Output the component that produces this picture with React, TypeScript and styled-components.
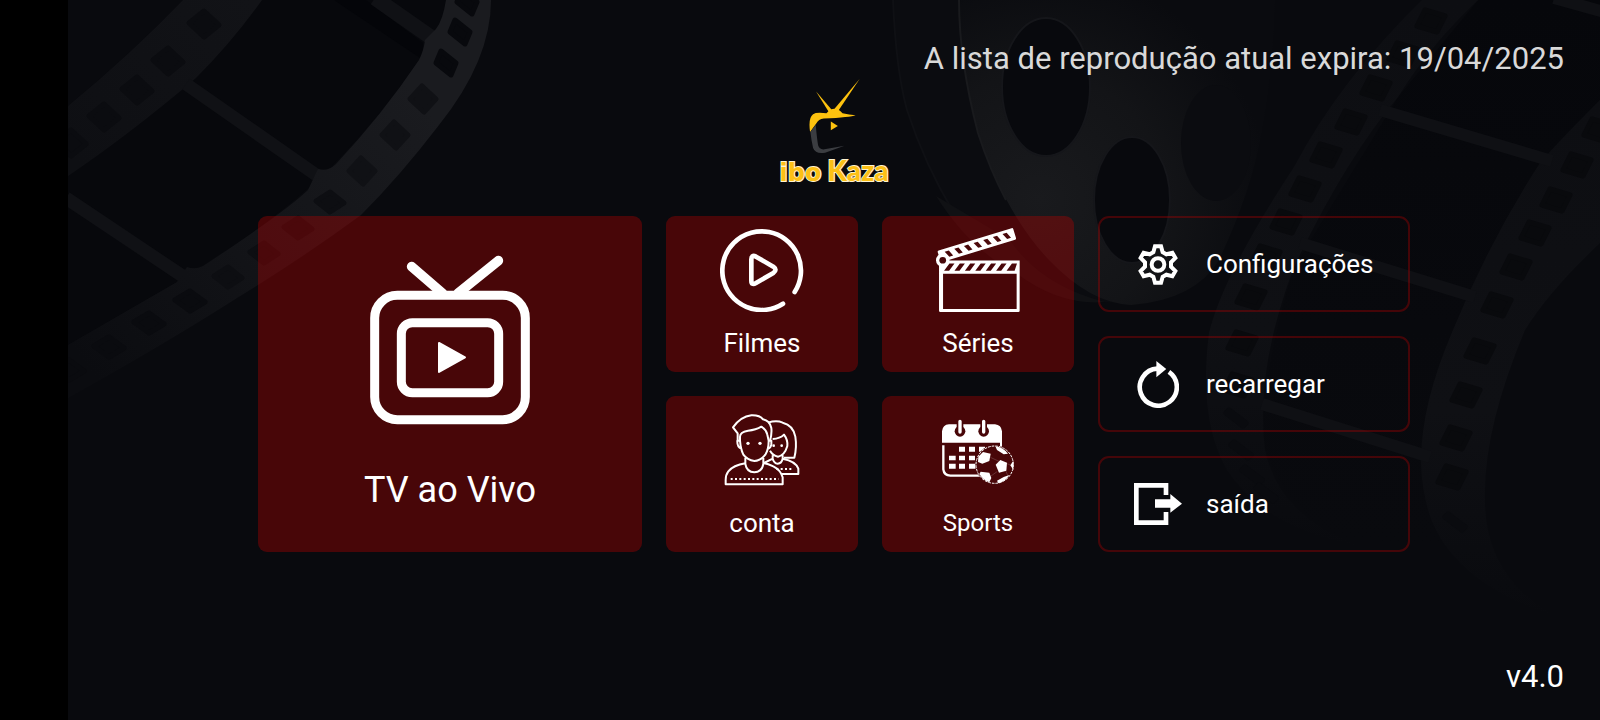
import React from "react";
import styled, { createGlobalStyle } from "styled-components";

const GlobalStyle = createGlobalStyle`
  *, *::before, *::after { box-sizing: border-box; }
  body {
    margin: 0;
    background: #000;
    color: #fff;
    font-family: Roboto, "Noto Sans", sans-serif;
  }
`;

const Page = styled.div`
  min-height: 100vh;
  padding-left: 68px;
  display: flex;
`;

const Stage = styled.main`
  position: relative;
  isolation: isolate;
  flex: 1;
  min-width: 0;
  display: flex;
  flex-direction: column;
  overflow: hidden;
  background: #090a0e;
`;

const Backdrop = styled.svg`
  position: absolute;
  inset: 0;
  width: 100%;
  height: 100%;
  z-index: -1;
`;

const Expiry = styled.p`
  margin: 0;
  padding: 41px 36px 0;
  text-align: right;
  font-size: 31px;
  line-height: 36px;
  color: #d9d9d9;
`;

const Brand = styled.h1`
  margin: 2px 0 0;
  display: flex;
  flex-direction: column;
  align-items: center;
  font-weight: 900;
  color: #fcc015;
`;

const Wordmark = styled.span`
  display: flex;
  align-items: baseline;
  gap: 6px;
  height: 32px;
  line-height: 32px;
`;

const Word = styled.span<{ $size: number; $family: string }>`
  font-family: ${({ $family }) => $family}, sans-serif;
  font-size: ${({ $size }) => $size}px;
  -webkit-text-stroke: 2px #fff3cf;
  paint-order: stroke fill;
`;

const Menu = styled.nav`
  width: 100%;
  max-width: 1152px;
  margin: 30px auto 0;
  display: grid;
  grid-template-columns: 384fr 408fr 312fr;
  gap: 24px;
`;

const TileGrid = styled.div`
  display: grid;
  grid-template-columns: 1fr 1fr;
  gap: 24px;
`;

const SideList = styled.div`
  display: grid;
  gap: 24px;
`;

const Tile = styled.button<{ $large?: boolean; $low?: boolean }>`
  display: flex;
  flex-direction: column;
  align-items: center;
  justify-content: space-between;
  min-height: 156px;
  padding: ${({ $large, $low }) =>
    $large ? "39px 12px 40px" : $low ? "18px 12px 13px" : "12px 12px 13px"};
  border: 0;
  border-radius: 9px;
  background: rgba(186, 0, 0, 0.36);
  color: inherit;
  font-family: inherit;
  font-size: ${({ $large }) => ($large ? 36 : 26)}px;
  line-height: ${({ $large }) => ($large ? 44 : 32)}px;
  cursor: pointer;
`;

const SmallLabel = styled.span`
  font-size: 24px;
`;

const SideButton = styled.button`
  display: flex;
  align-items: center;
  gap: 24px;
  height: 96px;
  padding: 0 34px;
  border: 2px solid rgba(184, 0, 0, 0.35);
  border-radius: 11px;
  background: transparent;
  color: inherit;
  font-family: inherit;
  font-size: 26px;
  line-height: 32px;
  cursor: pointer;
`;

const IconSlot = styled.span`
  flex: none;
  width: 48px;
  display: flex;
  justify-content: center;
`;

const Version = styled.footer`
  margin-top: auto;
  padding: 24px 36px 25px;
  text-align: right;
  font-size: 31px;
  line-height: 36px;
`;

type Point = [number, number];

/* Perforations: diamonds given by half axes; tilt shifts the side corners, lean the top and bottom ones */
const Holes = ({ at, rx, ry, tilt, lean, fill }: { at: Point[]; rx: number; ry: number; tilt: number; lean: number; fill: string }) => (
  <g fill={fill} stroke={fill} strokeWidth="5" strokeLinejoin="round">
    {at.map(([x, y]) => (
      <path key={`${x}-${y}`} d={`M${x - rx} ${y + tilt}L${x - lean} ${y - ry}L${x + rx} ${y - tilt}L${x + lean} ${y + ry}Z`} />
    ))}
  </g>
);

const SquareHoles = ({ at }: { at: Point[] }) => (
  <g fill="#090a0d" stroke="#090a0d" strokeWidth="5" strokeLinejoin="round">
    {at.map(([x, y]) => (
      <path key={`${x}-${y}`} d={`M${x - 6} ${y - 11}L${x + 14} ${y - 5}L${x + 6} ${y + 11}L${x - 14} ${y + 5}Z`} />
    ))}
  </g>
);

const BackdropArt = () => (
  <Backdrop viewBox="68 0 1532 720" preserveAspectRatio="xMidYMid slice" aria-hidden="true">
    <defs>
      <linearGradient id="stripFade" gradientUnits="userSpaceOnUse" x1="420" y1="100" x2="90" y2="370">
        <stop offset="0" stopColor="#1a1b1f" />
        <stop offset="0.5" stopColor="#131418" />
        <stop offset="1" stopColor="#0b0c10" />
      </linearGradient>
      <linearGradient id="stripTop" gradientUnits="userSpaceOnUse" x1="250" y1="0" x2="68" y2="150">
        <stop offset="0" stopColor="#121317" />
        <stop offset="1" stopColor="#0e0f13" />
      </linearGradient>
      <radialGradient id="plate" gradientUnits="userSpaceOnUse" cx="1040" cy="200" r="230">
        <stop offset="0" stopColor="#191a1d" />
        <stop offset="0.55" stopColor="#131417" />
        <stop offset="1" stopColor="#0a0b0f" />
      </radialGradient>
      <linearGradient id="farStrip" x1="0" y1="0" x2="0" y2="1">
        <stop offset="0" stopColor="#0d0e12" />
        <stop offset="0.6" stopColor="#0f1014" />
        <stop offset="1" stopColor="#090a0e" />
      </linearGradient>
      <linearGradient id="farFrames" x1="0" y1="0" x2="0" y2="1">
        <stop offset="0" stopColor="#06070b" />
        <stop offset="0.6" stopColor="#08090d" />
        <stop offset="1" stopColor="#090a0e" />
      </linearGradient>
    </defs>

    <path d="M183 0H446Q440 32 419 60Q382 115 331 167Q285 212 203 267L68 345V106Q130 55 183 0Z" fill="#07080c" />
    <path d="M334 0H366L423 43V60Z" fill="#040509" />
    <path d="M183 0Q130 55 68 106V176Q130 134 196 78Q232 42 262 0Z" fill="url(#stripTop)" />
    <g stroke="#101115" strokeWidth="13" fill="none">
      <path d="M186 84L322 179M66 198L190 281" />
      <path d="M375 -2L432 38" strokeWidth="15" />
    </g>
    <path
      d="M446 0Q443 20 436 29Q431 34 425 40Q424 50 419 60Q382 115 336 164Q328 172 318 169L308 190Q285 212 203 266Q195 270 187 267L177 282L68 345V398Q165 344 237 298Q304 257 361 215Q400 176 439 125Q491 60 491 0Z"
      fill="url(#stripFade)"
    />
    <Holes fill="#0b0c10" rx={15} ry={13} tilt={-1} lean={0} at={[[204, 24], [168, 61], [137, 90], [104, 117], [71, 143]]} />
    <Holes fill="#08090d" rx={10} ry={12} tilt={0} lean={5} at={[[467, 2], [460, 32], [446, 63]]} />
    <Holes
      fill="#101115"
      rx={13}
      ry={13}
      tilt={0}
      lean={1}
      at={[[423, 99], [395, 135], [362, 171]]}
    />
    <Holes fill="#0d0e12" rx={14} ry={10} tilt={-1} lean={0} at={[[330, 202], [298, 228], [264, 253], [228, 277]]} />
    <Holes fill="#0a0b0f" rx={15} ry={10} tilt={-1} lean={0} at={[[190, 301], [149, 323], [109, 347], [69, 370]]} />

    <path d="M893 0Q896 70 907 110Q925 165 954 213Q985 255 1016 273Q1045 295 1072 300L1130 304L960 0Z" fill="#0b0c10" />
    <path d="M893 0Q896 70 907 110Q925 165 954 213" fill="none" stroke="#0f1014" strokeWidth="2" />
    <path d="M936 196L1010 240Q1040 285 1105 302Q1060 306 1016 273Q970 250 936 196Z" fill="#101114" />
    <path
      d="M959 0Q959 60 978 133Q1006 215 1049 260Q1090 303 1131 305Q1195 300 1219 260Q1252 190 1262 130Q1273 70 1275 0Z"
      fill="url(#plate)"
    />
    <path d="M959 0Q959 60 978 133Q990 170 1006 200" fill="none" stroke="#191a1d" strokeWidth="2" />
    <g fill="#08090d" stroke="#15161a" strokeWidth="2">
      <ellipse cx="1046" cy="87" rx="44" ry="69" />
      <ellipse cx="1132" cy="200" rx="38" ry="63" />
    </g>
    <ellipse cx="1216" cy="143" rx="35" ry="58" fill="#0b0c10" />

    <path d="M1478 0L1398 97L1294 267Q1262 370 1263 440Q1280 510 1347 540L1440 543Q1410 460 1453 330Q1490 240 1540 163L1600 100V0Z" fill="url(#farFrames)" />
    <path
      d="M1422 0Q1340 80 1294 167Q1223 275 1209 333Q1198 420 1227 470Q1265 530 1367 548Q1280 520 1265 450Q1255 370 1294 267Q1345 160 1398 97Q1430 45 1478 0Z"
      fill="url(#farStrip)"
    />
    <path
      d="M1600 100Q1555 145 1540 163Q1490 240 1453 330Q1410 430 1425 497Q1440 580 1560 618Q1485 580 1485 500Q1483 430 1525 330Q1550 290 1600 243Z"
      fill="url(#farStrip)"
    />
    <path d="M1380 110L1552 161M1300 243L1475 297M1262 404L1430 457M1554 -2L1604 12" stroke="#0f1014" strokeWidth="12" fill="none" />
    <SquareHoles
      at={[[1431, 21], [1403, 54], [1376, 88], [1351, 122], [1326, 155], [1305, 189], [1286, 222], [1266, 257], [1251, 297], [1242, 343], [1238, 385]]}
    />
    <SquareHoles
      at={[[1598, 130], [1577, 165], [1556, 200], [1535, 233], [1516, 267], [1497, 305], [1480, 351], [1466, 395], [1456, 438], [1452, 477]]}
    />
    <Holes fill="#0a0b0f" rx={10} ry={8} tilt={-5} lean={7} at={[[1236, 418], [1241, 450], [1252, 475], [1266, 493], [1455, 522]]} />
  </Backdrop>
);

const LogoMark = () => (
  <svg width="51" height="75" viewBox="146 26 152 224" aria-hidden="true">
    <g fill="#fdc20f">
      <path d="M167 63L215 119L206 126Z" />
      <path d="M297 26L234 120L222 115Z" />
      <path d="M198 128Q222 102 246 128Q266 132 285 134Q270 140 190 144Q174 146 168 158L149 184Q143 142 158 131Q164 127 178 127Z" />
      <path d="M211 153V179L232 166Z" />
    </g>
    <path d="M150 184L166 163Q169 200 173 224Q177 238 192 236L252 225L194 246Q166 252 158 232Q153 210 150 184Z" fill="#3b3d41" />
  </svg>
);

const TvIcon = () => (
  <svg width="160" height="170" viewBox="90 45 480 510" fill="none" stroke="#fff" strokeWidth="27" aria-hidden="true">
    <rect x="104" y="166" width="452" height="373" rx="68" />
    <rect x="184" y="248" width="292" height="210" rx="33" />
    <path d="M215 80L308 160M475 62L354 160" strokeWidth="29" strokeLinecap="round" />
    <path d="M297 309V396L375 352Z" fill="#fff" strokeWidth="6" strokeLinejoin="round" />
  </svg>
);

const MovieIcon = () => (
  <svg width="84" height="84" viewBox="180 54 250 252" fill="none" stroke="#fff" strokeWidth="14" strokeLinecap="round" strokeLinejoin="round" aria-hidden="true">
    <path d="M403 246A118 118 0 1 0 368 281" />
    <path d="M273 148Q273 133 287 140L339 170Q352 179 339 189L287 219Q273 227 273 212Z" />
  </svg>
);

const steps = [0, 1, 2, 3, 4, 5, 6];

const ClapperIcon = () => (
  <svg width="84" height="84" viewBox="183 53 250 250" fill="#fff" aria-hidden="true">
    <path
      fillRule="evenodd"
      d={
        "M192 154Q192 150 210 150H432V299Q432 303 428 303H196Q192 303 192 299ZM204 189V294H423V189Z" +
        steps.map((i) => `M${207 + i * 31} 180L${223 + i * 31} 159H${i === 6 ? 424 : 238 + i * 31}L${i === 6 ? 417 : 222 + i * 31} 180Z`).join("")
      }
    />
    <path
      fillRule="evenodd"
      transform="translate(187 121) rotate(-17)"
      d={"M4 0H231Q235 0 235 4V32Q235 36 231 36H4Q0 36 0 32V4Q0 0 4 0Z" + steps.map((i) => `M${20 + i * 30} 9H${33 + i * 30}L${41 + i * 30} 27H${29 + i * 30}Z`).join("")}
    />
    <circle cx="203" cy="149" r="20" />
    <circle cx="203" cy="149" r="10" fill="#470709" />
  </svg>
);

const PeopleIcon = () => (
  <svg width="76" height="72" viewBox="192 72 228 216" fill="none" stroke="#fff" strokeWidth="6" strokeLinejoin="round" aria-hidden="true">
    <path d="M233 150V130L219 112Q242 80 274 76Q299 75 309 88Q329 92 334 114Q336 132 330 152" />
    <path d="M240 152V140Q240 126 264 122Q288 120 304 110Q320 120 322 134L326 152Q326 178 316 194Q302 212 283 213Q262 210 250 194Q242 178 240 152H232Q231 172 244 176M326 152H334V164Q332 174 324 176" />
    <path d="M256 204V222Q260 246 283 247Q306 246 310 222V204" />
    <path d="M256 220Q220 226 205 244Q197 254 197 270V283H368V262Q362 240 340 229Q325 221 310 219" />
    <path d="M324 98Q350 90 368 98Q400 106 406 140Q411 172 403 203H372" />
    <path d="M338 147Q360 146 372 134Q384 150 382 168Q374 196 354 200Q338 196 330 182M338 196V206Q342 220 353 221Q365 220 368 206V196M368 206Q408 214 415 236V252H366M338 206L312 219" />
    <g fill="#fff" stroke="none">
      <circle cx="264" cy="160" r="5" />
      <circle cx="300" cy="160" r="5" />
      <circle cx="341" cy="167" r="4" />
      <circle cx="365" cy="167" r="4" />
    </g>
    <path d="M212 267H356M349 237H394" strokeDasharray="6 7" />
  </svg>
);

const SportsIcon = () => (
  <svg width="74" height="72" viewBox="198 70 222 216" fill="#fff" aria-hidden="true">
    <mask id="ringGap">
      <rect x="190" y="80" width="240" height="210" fill="#fff" />
      <path d="M255 100V122M326 100V122" stroke="#000" strokeWidth="20" />
      <circle cx="255" cy="122" r="16" fill="#000" />
      <circle cx="326" cy="122" r="16" fill="#000" />
      <circle cx="359" cy="222" r="58" fill="#000" />
    </mask>
    <g mask="url(#ringGap)">
      <path d="M201 156V122Q203 102 222 101H360Q379 103 381 122V175H375V156Z" />
      <path d="M205 164V236Q207 254 226 255H320" fill="none" stroke="#fff" strokeWidth="7" />
      <path d="M252 168h18v15h-18zM282 168h18v15h-18zM312 168h18v15h-18zM222 195h20v14h-20zM252 195h18v14h-18zM282 195h18v14h-18zM222 219h20v15h-20zM252 219h18v15h-18zM282 219h20v15h-20z" />
    </g>
    <path d="M255 92V124M326 92V124" stroke="#fff" strokeWidth="10" strokeLinecap="round" />
    <circle cx="359" cy="222" r="56" fill="none" stroke="#fff" strokeWidth="3" strokeDasharray="8 3" />
    <path d="M362 222L376 208L396 216L394 240L372 246Z" />
    <path d="M310 198L324 184L347 189L343 211L322 219L309 214Z" />
    <path d="M317 243L343 246L349 262L343 275Q324 268 313 250Z" />
    <path d="M361 167Q384 170 399 189L386 191L366 178Z" />
    <path d="M415 210V238L406 224Z" />
    <path d="M366 270L386 259L403 253Q392 272 370 278Z" />
    <path d="M346 200L372 212M392 240L398 254M366 243L348 256M396 219L408 224" fill="none" stroke="#fff" strokeWidth="1" opacity="0.5" />
  </svg>
);

const gearTooth: Point[] = [[-14, -37], [-9, -55], [9, -55], [14, -37]];
const gearPoints = steps
  .slice(0, 6)
  .flatMap((k) => {
    const a = (k * Math.PI) / 3;
    return gearTooth.map(([x, y]) => `${(x * Math.cos(a) - y * Math.sin(a)).toFixed(1)},${(x * Math.sin(a) + y * Math.cos(a)).toFixed(1)}`);
  })
  .join(" ");

const GearIcon = () => (
  <svg width="40" height="41" viewBox="-60 -61 120 122" fill="none" stroke="#fff" strokeWidth="12" aria-hidden="true">
    <polygon points={gearPoints} />
    <circle r="19" />
  </svg>
);

const ReloadIcon = () => (
  <svg width="42" height="47" viewBox="141 467 126 142" aria-hidden="true">
    <path d="M237 500A56 56 0 1 1 202 490" fill="none" stroke="#fff" strokeWidth="14" />
    <path d="M199 467V516L229 491Z" fill="#fff" />
  </svg>
);

const ExitIcon = () => (
  <svg width="48" height="42" viewBox="132 834 144 126" aria-hidden="true">
    <path d="M228 870V841H139V953H228V921" fill="none" stroke="#fff" strokeWidth="14" />
    <path d="M195 883H241V867L276 896L241 923V908H195Z" fill="#fff" />
  </svg>
);

export default function App() {
  return (
    <>
      <GlobalStyle />
      <Page>
        <Stage>
          <BackdropArt />
          <Expiry>A lista de reprodução atual expira: 19/04/2025</Expiry>
          <Brand>
            <LogoMark />
            <Wordmark>
              <Word $size={24} $family='"DejaVu Sans"'>ibo</Word>
              <Word $size={28} $family="Lato">Kaza</Word>
            </Wordmark>
          </Brand>
          <Menu>
            <Tile $large type="button">
              <TvIcon />
              TV ao Vivo
            </Tile>
            <TileGrid>
              <Tile type="button">
                <MovieIcon />
                Filmes
              </Tile>
              <Tile type="button">
                <ClapperIcon />
                Séries
              </Tile>
              <Tile $low type="button">
                <PeopleIcon />
                conta
              </Tile>
              <Tile $low type="button">
                <SportsIcon />
                <SmallLabel>Sports</SmallLabel>
              </Tile>
            </TileGrid>
            <SideList>
              <SideButton type="button">
                <IconSlot><GearIcon /></IconSlot>
                Configurações
              </SideButton>
              <SideButton type="button">
                <IconSlot><ReloadIcon /></IconSlot>
                recarregar
              </SideButton>
              <SideButton type="button">
                <IconSlot><ExitIcon /></IconSlot>
                saída
              </SideButton>
            </SideList>
          </Menu>
          <Version>v4.0</Version>
        </Stage>
      </Page>
    </>
  );
}
